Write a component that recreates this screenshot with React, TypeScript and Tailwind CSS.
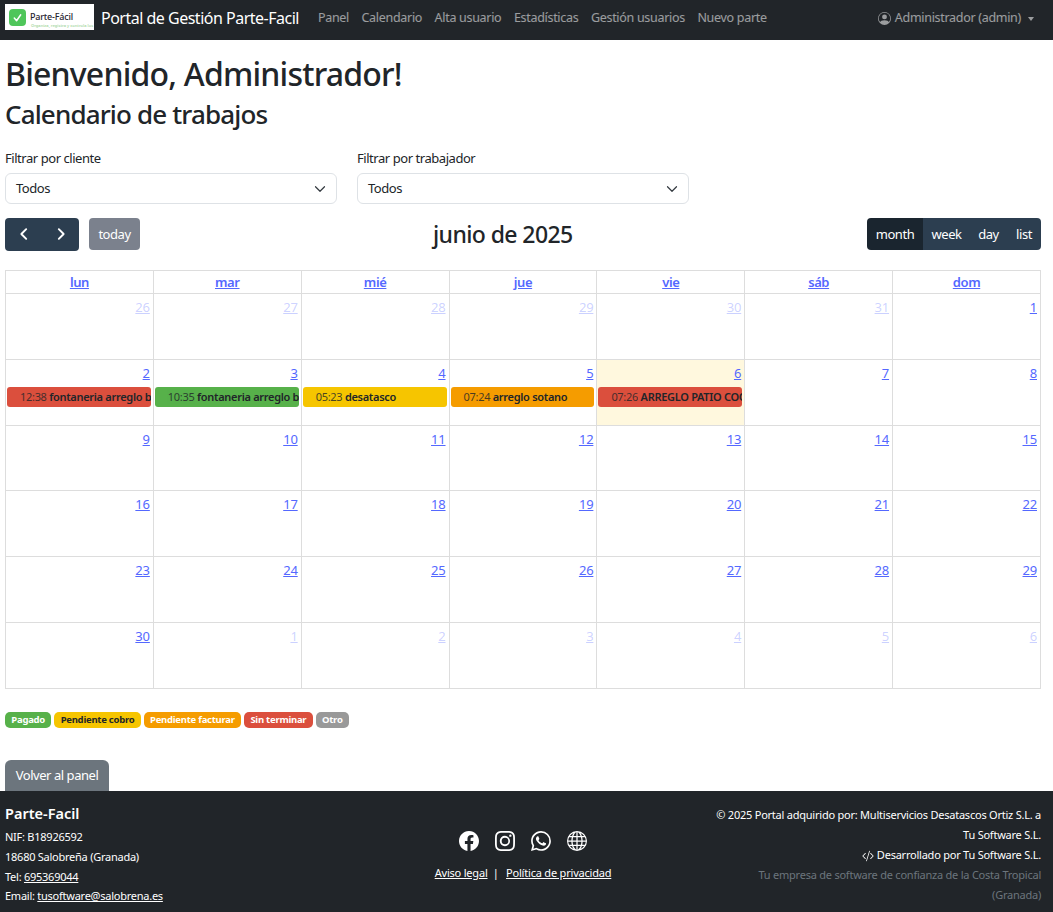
import React from "react";
import { BsPersonCircle, BsFacebook, BsInstagram, BsWhatsapp, BsGlobe, BsCodeSlash } from "react-icons/bs";

type Ev = { time: string; title: string; bg: string };
type Cell = { d: number; muted?: boolean; today?: boolean; ev?: Ev };

const days = ["lun", "mar", "mié", "jue", "vie", "sáb", "dom"];
const evs: Record<number, Ev> = {
  2: { time: "12:38", title: "fontaneria arreglo baño", bg: "bg-[#db4f3d]" },
  3: { time: "10:35", title: "fontaneria arreglo baño", bg: "bg-[#57b14a]" },
  4: { time: "05:23", title: "desatasco", bg: "bg-[#f6c500]" },
  5: { time: "07:24", title: "arreglo sotano", bg: "bg-[#f59c00]" },
  6: { time: "07:26", title: "ARREGLO PATIO COCINA", bg: "bg-[#db4f3d]" },
};

const grid: Cell[] = [
  ...[26, 27, 28, 29, 30, 31].map((d) => ({ d, muted: true })),
  ...Array.from({ length: 30 }, (_, i) => ({ d: i + 1, today: i + 1 === 6, ev: evs[i + 1] })),
  ...[1, 2, 3, 4, 5, 6].map((d) => ({ d, muted: true })),
];

const rows = Array.from({ length: 6 }, (_, i) => grid.slice(i * 7, i * 7 + 7));

function Select({ label }: { label: string }) {
  return (
    <div className="w-[332px]">
      <label className="block text-[13px] tracking-[-0.45px] leading-[20px] mb-[5px] text-[#212529]">{label}</label>
      <div className="h-[31px] border border-[#dee2e6] rounded-[6px] flex items-center justify-between pl-[10px] pr-[10px] text-[13px] tracking-[-0.45px] text-[#212529] bg-white">
        <span className="pt-[1px]">Todos</span>
        <svg width="12" height="12" viewBox="0 0 16 16" fill="none" stroke="#343a40" strokeWidth="1.6" strokeLinecap="round" strokeLinejoin="round">
          <path d="m2 5 6 6 6-6" />
        </svg>
      </div>
    </div>
  );
}

function App() {
  return (
    <div className="w-[1053px] h-[912px] overflow-hidden flex flex-col bg-white text-[#212529] font-['Noto_Sans','Open_Sans',sans-serif]">
      <nav className="h-[40px] shrink-0 bg-[#212529] flex items-center pl-[5px] pr-[17px] pb-[4px]">
        <div className="w-[89px] h-[26px] mb-[2px] bg-white flex items-center pl-[4px] relative overflow-hidden">
          <div className="w-[17px] h-[17px] rounded-[4px] bg-[#4fc65a] flex items-center justify-center">
            <svg width="11" height="11" viewBox="0 0 12 12" fill="none" stroke="white" strokeWidth="1.6" strokeLinecap="round" strokeLinejoin="round">
              <path d="M2.5 6.5 5 9.5 9.5 3" />
            </svg>
          </div>
          <span className="ml-[4px] -mt-[1px] text-[9px] tracking-[-0.2px] leading-none font-medium text-[#1f2430]">Parte-Fácil</span>
          <span className="absolute left-[26px] top-[19.5px] text-[4px] font-semibold leading-none whitespace-nowrap text-[#a9d8a5]">Organiza, registra y controla los partes</span>
        </div>
        <span className="ml-[7px] text-[16px] tracking-[-0.5px] text-white whitespace-nowrap">Portal de Gestión Parte-Facil</span>
        <div className="ml-[19px] flex gap-[12.5px] text-[12.5px] tracking-[-0.3px] text-white/55 whitespace-nowrap pt-[1px]">
          <span>Panel</span>
          <span>Calendario</span>
          <span>Alta usuario</span>
          <span>Estadísticas</span>
          <span>Gestión usuarios</span>
          <span>Nuevo parte</span>
        </div>
        <div className="ml-auto mr-[2px] flex items-center text-[12.5px] tracking-[-0.3px] text-white/55 whitespace-nowrap pt-[1px]">
          <BsPersonCircle className="w-[13px] h-[13px] mr-[4px]" />
          <span>Administrador (admin)</span>
          <span className="ml-[7px] w-0 h-0 border-x-[3.5px] border-x-transparent border-t-[4px] border-t-white/55" />
        </div>
      </nav>

      <main className="flex-1 px-[5px] min-h-0">
        <h1 className="mt-[10px] text-[32px] tracking-[-0.8px] leading-[48px] font-medium">Bienvenido, Administrador!</h1>
        <h2 className="text-[26px] tracking-[-0.85px] leading-[32px] font-medium">Calendario de trabajos</h2>
        <div className="mt-[18px] flex gap-[20px]">
          <Select label="Filtrar por cliente" />
          <Select label="Filtrar por trabajador" />
        </div>

        <div className="mt-[13px] w-[1036px] flex items-center justify-between relative h-[34px]">
          <div className="flex items-center">
            <div className="w-[74px] h-[33px] rounded-[4px] bg-[#2c3e50] flex items-center">
              <span className="w-[37px] flex justify-center">
                <svg width="14" height="14" viewBox="0 0 16 16" fill="none" stroke="white" strokeWidth="2.2" strokeLinecap="round" strokeLinejoin="round"><path d="M10.5 2.5 5 8l5.5 5.5" /></svg>
              </span>
              <span className="w-[37px] flex justify-center">
                <svg width="14" height="14" viewBox="0 0 16 16" fill="none" stroke="white" strokeWidth="2.2" strokeLinecap="round" strokeLinejoin="round"><path d="M5.5 2.5 11 8l-5.5 5.5" /></svg>
              </span>
            </div>
            <div className="ml-[10px] w-[51px] h-[32px] pt-[1px] rounded-[4px] bg-[#7b818d] text-white text-[13px] tracking-[-0.45px] flex items-center justify-center">today</div>
          </div>
          <div className="absolute left-[428px] text-[23px] tracking-[-0.6px] font-medium leading-[34px] whitespace-nowrap">junio de 2025</div>
          <div className="flex h-[32px] rounded-[4px] overflow-hidden text-white text-[13px] tracking-[-0.45px]">
            <div className="bg-[#1a252f] w-[56px] pt-[1px] flex items-center justify-center">month</div>
            <div className="bg-[#2c3e50] w-[47px] pt-[1px] flex items-center justify-center">week</div>
            <div className="bg-[#2c3e50] w-[37px] pt-[1px] flex items-center justify-center">day</div>
            <div className="bg-[#2c3e50] w-[34px] pt-[1px] flex items-center justify-center">list</div>
          </div>
        </div>

        <table className="mt-[19px] w-[1036px] table-fixed border-collapse text-[13px]">
          <thead>
            <tr className="h-[23px]">
              {days.map((d) => (
                <th key={d} className="border border-[#dddddd] p-0 font-semibold tracking-[-0.4px] text-[#5468ff] underline leading-[20px] align-middle">{d}</th>
              ))}
            </tr>
          </thead>
          <tbody>
            {rows.map((row, i) => (
              <tr key={i} className="h-[65.8px]">
                {row.map((c, j) => (
                  <td key={j} className={`border border-[#dddddd] p-0 align-top overflow-hidden ${c.today ? "bg-[#fff8de]" : ""}`}>
                    <div className={`text-right pr-[3px] pt-[3px] leading-[20px] tracking-[-0.2px] underline ${c.muted ? "text-[#5468ff]/30" : "text-[#5468ff]"}`}>{c.d}</div>
                    {c.ev && (
                      <div className={`mt-[4px] ml-[1px] mr-[2px] -mb-[20px] h-[20px] rounded-[3px] ${c.ev.bg} overflow-hidden whitespace-nowrap pl-[13px] text-[11px] tracking-[-0.3px] leading-[20px] text-[#212529]`}>
                        <span className="opacity-80">{c.ev.time}</span> <span className="font-semibold">{c.ev.title}</span>
                      </div>
                    )}
                  </td>
                ))}
              </tr>
            ))}
          </tbody>
        </table>

        <div className="mt-[23px] flex gap-[3px] text-[9.5px] tracking-[-0.25px] font-bold leading-[16px]">
          <span className="px-[6.3px] rounded-[5px] bg-[#57b14a] text-white">Pagado</span>
          <span className="px-[6.3px] rounded-[5px] bg-[#f6c500] text-[#212529]">Pendiente cobro</span>
          <span className="px-[6.3px] rounded-[5px] bg-[#f59c00] text-white">Pendiente facturar</span>
          <span className="px-[6.3px] rounded-[5px] bg-[#db4f3d] text-white">Sin terminar</span>
          <span className="px-[6.3px] rounded-[5px] bg-[#999999] text-white">Otro</span>
        </div>
        <div className="mt-[32px] w-[104px] h-[31px] pt-[1px] rounded-t-[6px] bg-[#6c757d] text-white text-[13px] tracking-[-0.45px] flex items-center justify-center">Volver al panel</div>
      </main>

      <footer className="h-[121px] shrink-0 bg-[#212529] text-white flex pl-[5px] pr-[12px] pt-[12px] text-[11px]">
        <div className="w-[344px] tracking-[-0.25px]">
          <div className="text-[14.5px] tracking-normal font-semibold leading-[20px] mb-[4px]">Parte-Facil</div>
          <div className="leading-[20px]">NIF: B18926592</div>
          <div className="leading-[19.5px]">18680 Salobreña (Granada)</div>
          <div className="leading-[19.5px]">Tel: <span className="underline">695369044</span></div>
          <div className="leading-[20px]">Email: <span className="underline">tusoftware@salobrena.es</span></div>
        </div>
        <div className="w-[348px] flex flex-col items-center pt-[28px]">
          <div className="flex gap-[16px] text-[20px]">
            <BsFacebook />
            <BsInstagram />
            <BsWhatsapp />
            <BsGlobe />
          </div>
          <div className="mt-[12px] leading-[20px] tracking-[-0.2px] whitespace-pre"><span className="underline">Aviso legal</span>  |  <span className="underline ml-[2px]">Política de privacidad</span></div>
        </div>
        <div className="flex-1 text-right leading-[20px] pt-[2px] tracking-[-0.23px]">
          <div className="whitespace-nowrap">© 2025 Portal adquirido por: Multiservicios Desatascos Ortiz S.L. a</div>
          <div>Tu Software S.L.</div>
          <div><BsCodeSlash className="inline w-[12px] h-[12px] mb-[1px]" /> Desarrollado por Tu Software S.L.</div>
          <div className="text-[#6c757d] whitespace-nowrap">Tu empresa de software de confianza de la Costa Tropical</div>
          <div className="text-[#6c757d]">(Granada)</div>
        </div>
      </footer>
    </div>
  );
}

export default App;
